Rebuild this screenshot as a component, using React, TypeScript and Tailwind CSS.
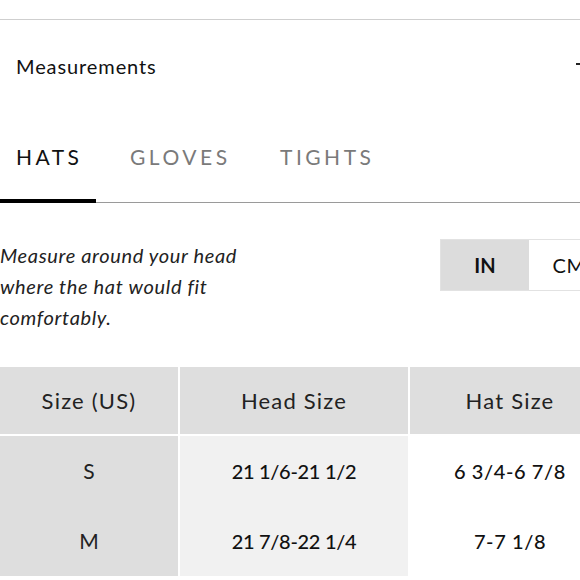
const font = "font-['Lato','Open_Sans',sans-serif]";

const rows = [
  { size: 'S', head: '21 1/6-21 1/2', hat: '6 3/4-6 7/8' },
  { size: 'M', head: '21 7/8-22 1/4', hat: '7-7 1/8' },
];

const App = () => {
  return (
    <div className={`w-[580px] h-[580px] overflow-hidden bg-white text-[#111] ${font}`}>
      <div className="w-[620px]">
        <div className="h-[19px]" />
        <div className="border-t border-[#cfcfcf]" />

        {/* accordion header */}
        <div className="w-[580px] flex items-center justify-between pl-4 py-[34px]">
          <span className="text-[20px] leading-[24px] tracking-[0.9px]">Measurements</span>
          <svg width="14" height="14" viewBox="0 0 14 14" className="-mr-[10px] mb-[5px] shrink-0">
            <path d="M0 7h14M7 0v14" stroke="#222" strokeWidth="2" />
          </svg>
        </div>

        {/* tabs */}
        <div className="flex items-end pt-[33px] border-b border-[#9a9a9a] text-[21px] leading-[24px] tracking-[3.5px]">
          <div className="w-[96px] pl-4 pb-[30px] border-b-4 border-black -mb-px text-[#111]">HATS</div>
          <div className="w-[150px] ml-[34px] pb-[30px] border-b-4 border-transparent -mb-px text-[#7a7a7a]">GLOVES</div>
          <div className="pb-[30px] border-b-4 border-transparent -mb-px text-[#7a7a7a]">TIGHTS</div>
        </div>

        {/* description + unit toggle */}
        <div className="flex items-start pt-[36px] pb-[34px]">
          <p className="w-[262px] pt-px text-[20px] leading-[31px] italic text-[#222] tracking-[0.65px]">
            Measure around your head where the hat would fit comfortably.
          </p>
          <div className="ml-[178px] flex border border-[#e2e2e2] h-[52px]">
            <div className="w-[88px] bg-[#dcdcdc] flex items-center justify-center text-[20px] font-bold">IN</div>
            <div className="w-[80px] bg-white flex items-center justify-center text-[20px] tracking-[0.5px]">CM</div>
          </div>
        </div>

        {/* size table */}
        <div className="grid grid-cols-[178px_228px_200px] gap-x-[2px]">
          <div className="h-[67px] mb-[2px] bg-[#dedede] flex items-center justify-center text-[22px] tracking-[1.2px] text-[#222]">Size (US)</div>
          <div className="h-[67px] mb-[2px] bg-[#dedede] flex items-center justify-center text-[22px] tracking-[1.2px] text-[#222]">Head Size</div>
          <div className="h-[67px] mb-[2px] bg-[#dedede] flex items-center justify-center text-[22px] tracking-[1.2px] text-[#222]">Hat Size</div>
          {rows.map((r) => (
            <>
              <div key={r.size + 'a'} className="h-[70px] bg-[#dedede] flex items-center justify-center text-[21px] text-[#222]">{r.size}</div>
              <div key={r.size + 'b'} className="h-[70px] bg-[#f1f1f1] flex items-center justify-center text-[20px] font-medium tracking-[-0.3px]">{r.head}</div>
              <div key={r.size + 'c'} className="h-[70px] bg-white flex items-center justify-center text-[20px] font-medium tracking-[0.6px]">{r.hat}</div>
            </>
          ))}
        </div>
      </div>
    </div>
  );
};

export default App;
